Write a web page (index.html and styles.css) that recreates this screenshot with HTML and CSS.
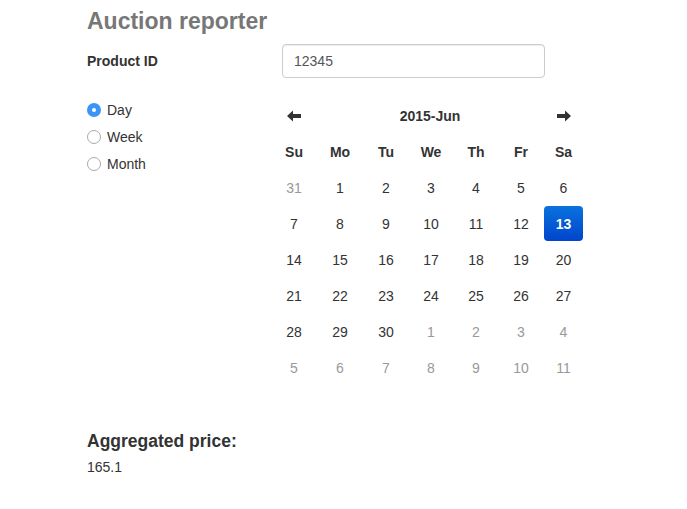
FILE: index.html
```html
<!DOCTYPE html>
<html>
<head>
<meta charset="utf-8">
<link rel="stylesheet" href="styles.css">
</head>
<body>
<div class="page">
  <h1 class="title">Auction reporter</h1>
  <div class="row product">
    <label class="left label">Product ID</label>
    <div class="right"><div class="input">12345</div></div>
  </div>
  <div class="row main">
    <div class="left radios">
      <div class="radio"><span class="dot checked"></span>Day</div>
      <div class="radio"><span class="dot"></span>Week</div>
      <div class="radio"><span class="dot"></span>Month</div>
    </div>
    <div class="right">
      <div class="cal">
        <div class="cell nav"><svg width="14" height="12" viewBox="0 0 14 12"><path d="M0 6 L6 0.5 L6 4 L14 4 L14 8 L6 8 L6 11.5 Z" fill="#333"/></svg></div>
        <div class="cell month">2015-Jun</div>
        <div class="cell nav"><svg width="14" height="12" viewBox="0 0 14 12"><path d="M14 6 L8 0.5 L8 4 L0 4 L0 8 L8 8 L8 11.5 Z" fill="#333"/></svg></div>
        <div class="cell dow">Su</div><div class="cell dow">Mo</div><div class="cell dow">Tu</div><div class="cell dow">We</div><div class="cell dow">Th</div><div class="cell dow">Fr</div><div class="cell dow">Sa</div>
        <div class="cell old">31</div><div class="cell">1</div><div class="cell">2</div><div class="cell">3</div><div class="cell">4</div><div class="cell">5</div><div class="cell">6</div>
        <div class="cell">7</div><div class="cell">8</div><div class="cell">9</div><div class="cell">10</div><div class="cell">11</div><div class="cell">12</div><div class="cell active">13</div>
        <div class="cell">14</div><div class="cell">15</div><div class="cell">16</div><div class="cell">17</div><div class="cell">18</div><div class="cell">19</div><div class="cell">20</div>
        <div class="cell">21</div><div class="cell">22</div><div class="cell">23</div><div class="cell">24</div><div class="cell">25</div><div class="cell">26</div><div class="cell">27</div>
        <div class="cell">28</div><div class="cell">29</div><div class="cell">30</div><div class="cell old">1</div><div class="cell old">2</div><div class="cell old">3</div><div class="cell old">4</div>
        <div class="cell old">5</div><div class="cell old">6</div><div class="cell old">7</div><div class="cell old">8</div><div class="cell old">9</div><div class="cell old">10</div><div class="cell old">11</div>
      </div>
    </div>
  </div>
  <h2 class="agg">Aggregated price:</h2>
  <div class="value">165.1</div>
</div>
</body>
</html>
```
FILE: styles.css
```css
html, body { margin: 0; padding: 0; background: #fff; }
body { font-family: "Liberation Sans", Arial, sans-serif; font-size: 14px; color: #333; }
.page { padding: 0 0 0 87px; }
.title { margin: 8px 0 0; font-size: 23px; line-height: 26px; font-weight: bold; color: #777; }
.row { display: flex; }
.left { width: 195px; flex: none; }
.right { width: 301px; }
.product { margin-top: 10px; align-items: center; }
.label { font-weight: bold; font-size: 14px; line-height: 20px; }
.input { box-sizing: border-box; height: 34px; width: 263px; border: 1px solid #ccc; border-radius: 4px; padding: 0 11px; line-height: 32px; font-size: 14px; color: #555; box-shadow: inset 0 1px 1px rgba(0,0,0,.075); }
.main { margin-top: 20px; }
.radios { padding-top: 2px; }
.radio { display: flex; align-items: center; height: 20px; line-height: 20px; margin-bottom: 7px; font-size: 14px; }
.dot { box-sizing: border-box; width: 14px; height: 14px; border-radius: 50%; border: 1px solid #aaa; background: #fff; margin: 0 6px 0 0; position: relative; }
.dot.checked { border: none; background: #3a95f6; }
.dot.checked::after { content: ""; position: absolute; left: 5px; top: 5px; width: 4px; height: 4px; border-radius: 50%; background: #fff; }
.cal { margin-left: -10px; display: grid; grid-template-columns: 44px 48px 44px 46px 44px 46px 39px; grid-auto-rows: 36px; }
.cell { display: flex; align-items: center; justify-content: center; font-size: 14px; }
.month { grid-column: span 5; font-weight: bold; }
.nav svg { display: block; }
.dow { font-weight: bold; }
.old { color: #999; }
.active { color: #fff; font-weight: bold; border-radius: 4px; background: linear-gradient(to bottom, #0a72de, #0045cc); height: 35px; }
.agg { margin: 45px 0 0; font-size: 17.5px; line-height: 20px; font-weight: bold; color: #333; }
.value { margin-top: 6px; line-height: 20px; font-size: 14px; }
```
